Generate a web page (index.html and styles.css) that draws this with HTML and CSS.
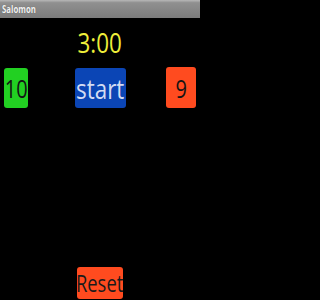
FILE: index.html
```html
<!DOCTYPE html>
<html>
<head>
<meta charset="utf-8">
<link rel="stylesheet" href="styles.css">
</head>
<body>
<div class="screen">
  <div class="titlebar"><span class="title">Salomon</span></div>
  <div class="timer"><span class="sq">3:00</span></div>
  <div class="row">
    <div class="score green"><span class="sq">10</span></div>
    <div class="start"><span class="sq">start</span></div>
    <div class="score orange"><span class="sq">9</span></div>
  </div>
  <div class="reset"><span class="sq">Reset</span></div>
</div>
</body>
</html>
```
FILE: styles.css
```css
html, body {
  margin: 0;
  padding: 0;
  background: #000;
}
.screen {
  width: 200px;
  height: 300px;
  display: flex;
  flex-direction: column;
  font-family: "Open Sans", "DejaVu Sans", sans-serif;
  overflow: hidden;
}
.titlebar {
  height: 18px;
  background: linear-gradient(#b8b8b8 0%, #909090 15%, #7c7c7c 100%);
  display: flex;
  align-items: center;
  padding-left: 2px;
}
.title {
  display: inline-block;
  color: #f2f2f2;
  font-weight: bold;
  font-size: 10px;
  transform: scaleX(0.78);
  transform-origin: left center;
  text-shadow: 0 0 1px #555;
}
.sq {
  display: inline-block;
  transform: scaleX(0.8);
  white-space: nowrap;
}
.timer {
  margin-top: 10px;
  height: 28px;
  line-height: 28px;
  font-size: 28px;
  color: #eeee3a;
  text-align: center;
}
.row {
  margin-top: 11px;
  padding: 0 4px;
  display: grid;
  grid-template-columns: 1fr auto 1fr;
  align-items: end;
}
.score {
  height: 40px;
  line-height: 41px;
  font-size: 25px;
  color: #141414;
  border-radius: 3px;
  display: flex;
  justify-content: center;
}
.green {
  width: 24px;
  background: #22d022;
  justify-self: start;
}
.orange {
  width: 30px;
  height: 41px;
  line-height: 43px;
  background: #ff4b1f;
  justify-self: end;
}
.start {
  width: 51px;
  height: 40px;
  line-height: 40px;
  font-size: 28px;
  color: #d4dcf2;
  background: #0b45b5;
  border-radius: 3px;
  display: flex;
  justify-content: center;
}
.reset {
  margin-top: auto;
  margin-bottom: 1px;
  align-self: center;
  width: 46px;
  height: 32px;
  line-height: 32px;
  font-size: 23px;
  color: #1a1a1a;
  background: #ff4b1f;
  border-radius: 3px;
  display: flex;
  justify-content: center;
}
```
